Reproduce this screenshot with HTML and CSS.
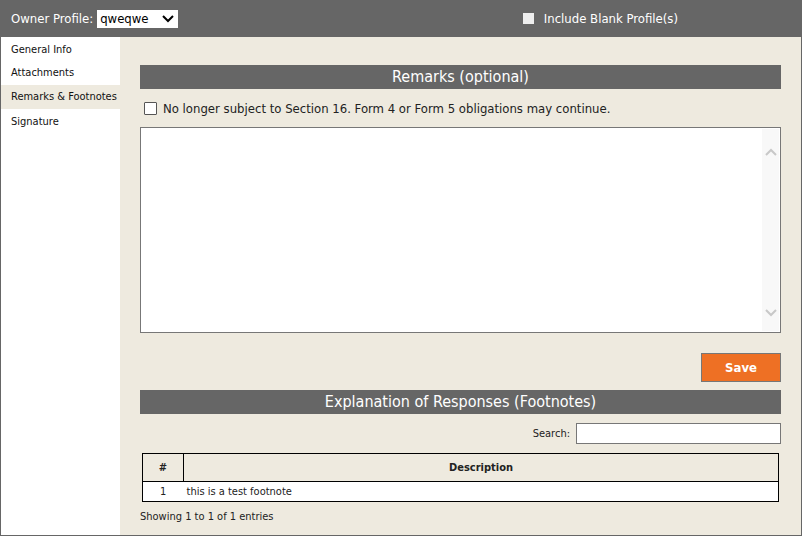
FILE: index.html
```html
<!DOCTYPE html>
<html>
<head>
<meta charset="utf-8">
<link rel="stylesheet" href="styles.css">
</head>
<body>
<div class="page">
  <div class="topbar">
    <div class="owner">
      <span class="owner-label">Owner Profile:</span>
      <span class="select">qweqwe<svg class="caret" width="12" height="8" viewBox="0 0 12 8"><path d="M1 1 L6 6 L11 1" fill="none" stroke="#000" stroke-width="2"/></svg></span>
    </div>
    <div class="blank">
      <span class="blank-box"></span>
      <span>Include Blank Profile(s)</span>
    </div>
  </div>
  <div class="body">
    <nav class="sidebar">
      <div class="nav-item">General Info</div>
      <div class="nav-item">Attachments</div>
      <div class="nav-item active">Remarks &amp; Footnotes</div>
      <div class="nav-item">Signature</div>
    </nav>
    <main class="main">
      <div class="section-title">Remarks (optional)</div>
      <label class="check-line"><span class="checkbox"></span>No longer subject to Section 16. Form 4 or Form 5 obligations may continue.</label>
      <div class="textarea">
        <div class="scroll">
          <svg width="12" height="8" viewBox="0 0 12 8"><path d="M1 7 L6 2 L11 7" fill="none" stroke="#c8c8c8" stroke-width="2"/></svg>
          <svg width="12" height="8" viewBox="0 0 12 8"><path d="M1 1 L6 6 L11 1" fill="none" stroke="#c8c8c8" stroke-width="2"/></svg>
        </div>
      </div>
      <div class="save-row"><button class="save">Save</button></div>
      <div class="section-title">Explanation of Responses (Footnotes)</div>
      <div class="search-row"><span>Search:</span><span class="search-input"></span></div>
      <table class="table">
        <thead>
          <tr><th class="col-num">#</th><th>Description</th></tr>
        </thead>
        <tbody>
          <tr><td class="col-num">1</td><td>this is a test footnote</td></tr>
        </tbody>
      </table>
      <div class="info">Showing 1 to 1 of 1 entries</div>
    </main>
  </div>
</div>
</body>
</html>
```
FILE: styles.css
```css
* { box-sizing: border-box; }
html, body { margin: 0; padding: 0; }
body {
  font-family: Tahoma, "DejaVu Sans Condensed", "DejaVu Sans", sans-serif;
  color: #222;
  background: #fff;
}
.page {
  width: 802px;
  height: 536px;
  display: flex;
  flex-direction: column;
  border: 1px solid #666;
  border-top: none;
}
.topbar {
  height: 37px;
  background: #666;
  margin: 0 -1px;
  display: flex;
  align-items: center;
  justify-content: space-between;
  color: #fff;
  font-size: 13px;
  padding: 0 124px 0 11px;
}
.owner { display: flex; align-items: center; gap: 4px; }
.select {
  background: #fff;
  color: #000;
  height: 18px;
  width: 81px;
  display: flex;
  align-items: center;
  justify-content: space-between;
  padding: 0 4px 0 3px;
  font-size: 13px;
}
.caret { display: block; }
.blank { display: flex; align-items: center; gap: 10px; }
.blank-box { width: 11px; height: 11px; background: #eee; }
.body { flex: 1; display: flex; min-height: 0; }
.sidebar {
  width: 119px;
  background: #fff;
  font-size: 11px;
  color: #111;
  padding-top: 1px;
}
.nav-item {
  height: 24px;
  line-height: 23px;
  padding-left: 10px;
  white-space: nowrap;
}
.nav-item:first-child { height: 23px; }
.nav-item:last-child { line-height: 25px; }
.nav-item.active { background: #eeeadf; }
.main {
  flex: 1;
  background: #eeeadf;
  padding: 28px 20px 0 20px;
  display: flex;
  flex-direction: column;
}
.section-title {
  background: #666;
  color: #fff;
  height: 24px;
  line-height: 24px;
  text-align: center;
  font-size: 16px;
}
.check-line {
  display: flex;
  align-items: center;
  gap: 6px;
  font-size: 13px;
  height: 38px;
  padding-left: 4px;
  color: #222;
}
.checkbox {
  width: 13px; height: 13px;
  border: 1px solid #555;
  background: #fff;
  border-radius: 1px;
}
.textarea {
  height: 206px;
  background: #fff;
  border: 1px solid #777;
  display: flex;
  justify-content: flex-end;
  padding: 1px 1px;
}
.scroll {
  width: 17px;
  background: #f8f8f8;
  display: flex;
  flex-direction: column;
  justify-content: space-between;
  align-items: center;
  padding: 19px 0 14px;
}
.scroll svg { display: block; }
.save-row {
  display: flex;
  justify-content: flex-end;
  padding-top: 20px;
  height: 57px;
}
.save {
  width: 80px;
  height: 29px;
  background: #ee7024;
  border: 1px solid #777;
  color: #fff;
  font-family: inherit;
  font-weight: bold;
  font-size: 13px;
  padding: 0;
}
.search-row {
  display: flex;
  justify-content: flex-end;
  align-items: center;
  gap: 6px;
  font-size: 11px;
  margin-top: 8px;
  height: 22px;
}
.search-input {
  width: 205px;
  height: 21px;
  background: #fff;
  border: 1px solid #777;
}
.table {
  margin: 9px 2px 0 2px;
  border-collapse: collapse;
  font-size: 11px;
  width: 637px;
}
.table th, .table td {
  border: 1px solid #000;
  padding: 0;
}
.table th {
  height: 28px;
  font-weight: bold;
  text-align: center;
}
.table thead tr { background: #eeeadf; }
.table tbody tr { background: #fff; }
.table td { height: 20px; padding-left: 3px; }
.table .col-num { width: 41px; }
.table td.col-num { text-align: center; padding-left: 0; }
.table tbody td { border-left: none; border-right: none; }
.table tbody td:first-child { border-left: 1px solid #000; }
.table tbody td:last-child { border-right: 1px solid #000; }
.info {
  font-size: 11px;
  margin-top: 8px;
}
```
